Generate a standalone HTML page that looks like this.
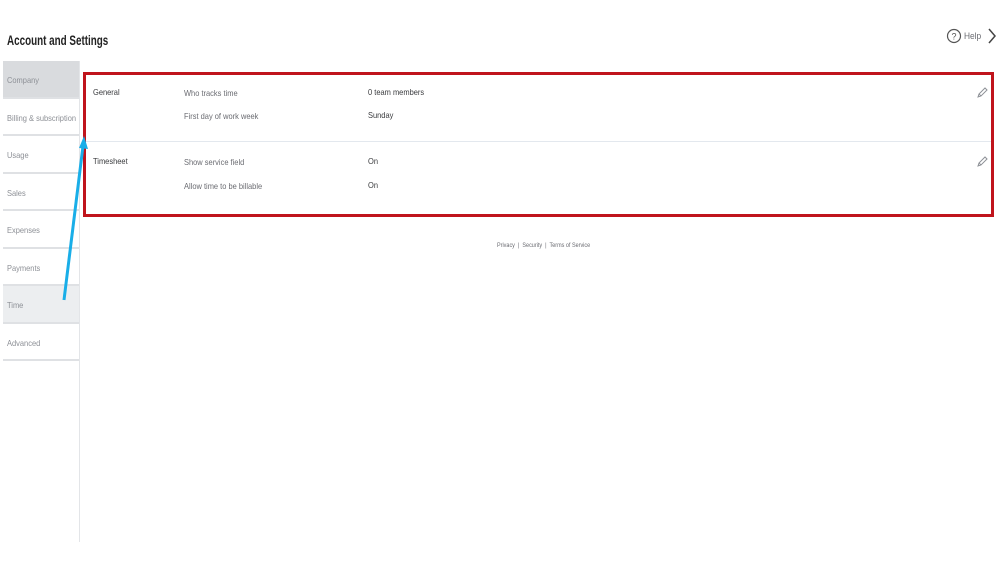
<!DOCTYPE html>
<html><head><meta charset="utf-8">
<style>
*{margin:0;padding:0;box-sizing:border-box}
body{width:999px;height:562px;background:#fff;font-family:"Liberation Sans",sans-serif;position:relative;overflow:hidden;color:#393a3d}
.t{position:absolute;white-space:nowrap;transform-origin:0 0;transform:scaleX(.88)}
h1{position:absolute;left:7px;top:33px;font-size:13.5px;font-weight:bold;color:#222;transform:scaleX(.73);transform-origin:0 0;white-space:nowrap}
.side{position:absolute;left:3px;top:61px;width:77px;height:481px;border-right:1px solid #e3e5e8}
.it{height:37.5px;border-bottom:2px solid #dfe1e4;font-size:8.5px;color:#8d9096;padding:14px 0 0 4px}
.it span{display:inline-block;transform:scaleX(.88);transform-origin:0 0;white-space:nowrap}
.box{position:absolute;left:83px;top:72px;width:911px;height:145px;border:3px solid #c0141c}
.div{position:absolute;left:86px;top:141px;width:905px;height:1px;background:#e3e8ee}
.l{font-size:8.5px;color:#393a3d}
.g{font-size:8.5px;color:#6b6c72}
.v{font-size:8.5px;color:#393a3d}
</style></head><body>
<h1>Account and Settings</h1>
<svg style="position:absolute;left:946px;top:28px" width="16" height="16" viewBox="0 0 16 16"><circle cx="8" cy="8" r="6.5" fill="none" stroke="#555" stroke-width="1.2"/><text x="8" y="11.5" font-size="9" text-anchor="middle" fill="#555" font-family="Liberation Sans">?</text></svg>
<div class="t" style="left:964px;top:31px;font-size:9.5px;color:#6b6c72">Help</div>
<svg style="position:absolute;left:987px;top:28px" width="10" height="16"><path d="M2 1 L8 8 L2 15" fill="none" stroke="#444" stroke-width="1.5"/></svg>
<div class="side">
<div class="it" style="background:#d9dbde"><span>Company</span></div>
<div class="it"><span>Billing &amp; subscription</span></div>
<div class="it"><span>Usage</span></div>
<div class="it"><span>Sales</span></div>
<div class="it"><span>Expenses</span></div>
<div class="it"><span>Payments</span></div>
<div class="it" style="background:#eceef0"><span>Time</span></div>
<div class="it"><span>Advanced</span></div>
</div>
<div class="box"></div>
<div class="div"></div>
<div class="t l" style="left:93px;top:87px">General</div>
<div class="t g" style="left:184px;top:88px">Who tracks time</div>
<div class="t v" style="left:368px;top:87px">0 team members</div>
<div class="t g" style="left:184px;top:111px">First day of work week</div>
<div class="t v" style="left:368px;top:110px">Sunday</div>
<div class="t l" style="left:93px;top:156px">Timesheet</div>
<div class="t g" style="left:184px;top:157px">Show service field</div>
<div class="t v" style="left:368px;top:156px">On</div>
<div class="t g" style="left:184px;top:181px">Allow time to be billable</div>
<div class="t v" style="left:368px;top:180px">On</div>
<svg style="position:absolute;left:976px;top:87px" width="12" height="12"><path d="M2 10 L3 7 L9 1 L11 3 L5 9 Z M3 7 L5 9" fill="none" stroke="#8d9096" stroke-width="1"/></svg>
<svg style="position:absolute;left:976px;top:156px" width="12" height="12"><path d="M2 10 L3 7 L9 1 L11 3 L5 9 Z M3 7 L5 9" fill="none" stroke="#8d9096" stroke-width="1"/></svg>
<div class="t" style="left:497px;top:242px;font-size:6.5px;color:#6b6c72;transform:scaleX(.84)">Privacy &nbsp;|&nbsp; Security &nbsp;|&nbsp; Terms of Service</div>
<svg style="position:absolute;left:0;top:0" width="999" height="562"><line x1="64" y1="300" x2="83" y2="146" stroke="#19aee8" stroke-width="3"/><path d="M84 136 L79 148 L88 149 Z" fill="#19aee8"/></svg>
</body></html>
